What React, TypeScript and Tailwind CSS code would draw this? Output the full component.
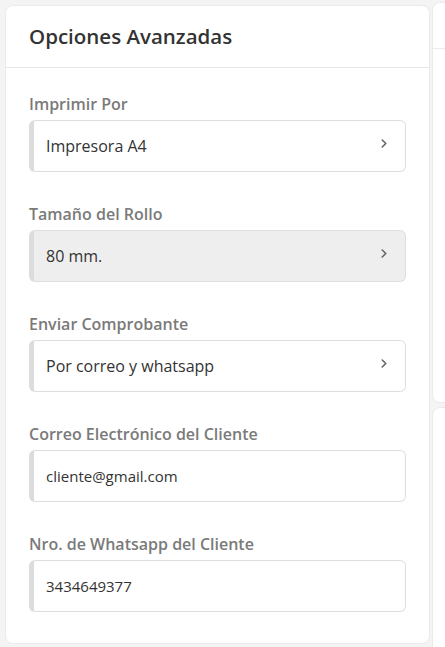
import React from "react";

type Field = {
  label: string;
  value: string;
  kind: "select" | "input";
  disabled?: boolean;
};

const fields: Field[] = [
  { label: "Imprimir Por", value: "Impresora A4", kind: "select" },
  { label: "Tamaño del Rollo", value: "80 mm.", kind: "select", disabled: true },
  { label: "Enviar Comprobante", value: "Por correo y whatsapp", kind: "select" },
  { label: "Correo Electrónico del Cliente", value: "cliente@gmail.com", kind: "input" },
  { label: "Nro. de Whatsapp del Cliente", value: "3434649377", kind: "input" },
];

function Chevron() {
  return (
    <svg width="8" height="11" viewBox="0 0 8 11" fill="none" className="shrink-0 mb-[6px]">
      <path d="M2.2 2 L5.8 5.5 L2.2 9" stroke="#666" strokeWidth="1.6" strokeLinecap="round" strokeLinejoin="round" />
    </svg>
  );
}

function FieldRow({ field }: { field: Field }) {
  return (
    <div className="flex flex-col">
      <label className="text-[16px] leading-6 font-semibold text-[#7a7a7a] mb-1">{field.label}</label>
      <div
        className={`flex items-center h-[52px] rounded-md border border-[#dedede] border-l-[5px] border-l-[#dcdcdc] pl-[12px] pr-[17px] ${
          field.disabled ? "bg-[#eeeeee]" : "bg-white"
        }`}
      >
        <span
          className={`flex-1 text-[#333] ${field.kind === "input" ? "text-[15px]" : "text-[16px]"}`}
        >
          {field.value}
        </span>
        {field.kind === "select" && <Chevron />}
      </div>
    </div>
  );
}

export default function App() {
  return (
    <div
      className="min-h-[647px] w-[445px] overflow-hidden bg-[#f4f4f4] flex items-start"
      style={{ fontFamily: '"Open Sans", "Noto Sans", sans-serif' }}
    >
      {/* Main card */}
      <div className="mt-[5px] ml-[5px] w-[425px] shrink-0 bg-white rounded-lg border border-[#ebebeb]">
        <div className="h-[62px] flex items-center px-[23px] border-b border-[#e6e6e6]">
          <h2 className="text-[20.5px] font-semibold text-[#333]">Opciones Avanzadas</h2>
        </div>
        <div className="px-[23px] pt-[24px] pb-[31px] flex flex-col gap-[30px]">
          {fields.map((f) => (
            <FieldRow key={f.label} field={f} />
          ))}
        </div>
      </div>

      {/* Cropped side column */}
      <div className="ml-[2px] mt-[2px] flex flex-col gap-[4px] shrink-0">
        <div className="w-[60px] h-[401px] bg-white rounded-lg border border-[#ebebeb]">
          <div className="h-[46px] border-b border-[#ececec]" />
        </div>
        <div className="w-[60px] h-[260px] bg-white rounded-lg border border-[#ebebeb]" />
      </div>
    </div>
  );
}
